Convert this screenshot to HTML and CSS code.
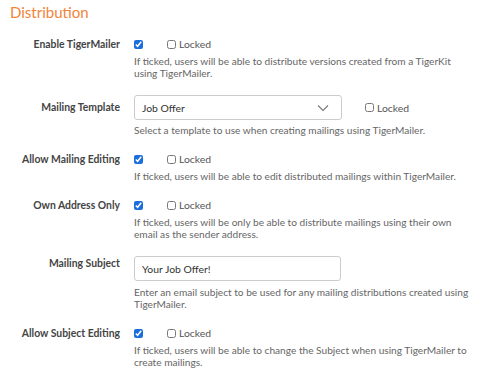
FILE: index.html
```html
<!DOCTYPE html>
<html lang="en">
<head>
  <meta charset="UTF-8" />
  <title>Distribution Settings</title>
  <link rel="stylesheet" href="styles.css">
</head>
<body>

  <h2 class="section-title">Distribution</h2>

  <div class="form-row">
    <label class="field-label">Enable TigerMailer</label>
    <div class="field">
      <div class="controls">
        <input type="checkbox" class="check" checked>
        <label class="lock"><input type="checkbox" class="check">Locked</label>
      </div>
      <p class="help">If ticked, users will be able to distribute versions created from a TigerKit using TigerMailer.</p>
    </div>
  </div>

  <div class="form-row">
    <label class="field-label label-select">Mailing Template</label>
    <div class="field">
      <div class="controls">
        <div class="select">
          <span>Job Offer</span>
          <svg width="12" height="8" viewBox="0 0 12 8"><path d="M1 1.5 L6 6.5 L11 1.5" fill="none" stroke="#777" stroke-width="1.1"/></svg>
        </div>
        <label class="lock lock-wide"><input type="checkbox" class="check">Locked</label>
      </div>
      <p class="help">Select a template to use when creating mailings using TigerMailer.</p>
    </div>
  </div>

  <div class="form-row">
    <label class="field-label">Allow Mailing Editing</label>
    <div class="field">
      <div class="controls">
        <input type="checkbox" class="check" checked>
        <label class="lock"><input type="checkbox" class="check">Locked</label>
      </div>
      <p class="help">If ticked, users will be able to edit distributed mailings within TigerMailer.</p>
    </div>
  </div>

  <div class="form-row">
    <label class="field-label">Own Address Only</label>
    <div class="field">
      <div class="controls">
        <input type="checkbox" class="check" checked>
        <label class="lock"><input type="checkbox" class="check">Locked</label>
      </div>
      <p class="help">If ticked, users will be only be able to distribute mailings using their own email as the sender address.</p>
    </div>
  </div>

  <div class="form-row">
    <label class="field-label label-input">Mailing Subject</label>
    <div class="field">
      <div class="controls">
        <input type="text" class="text-input" value="Your Job Offer!">
      </div>
      <p class="help help-input">Enter an email subject to be used for any mailing distributions created using TigerMailer.</p>
    </div>
  </div>

  <div class="form-row">
    <label class="field-label">Allow Subject Editing</label>
    <div class="field">
      <div class="controls">
        <input type="checkbox" class="check" checked>
        <label class="lock"><input type="checkbox" class="check">Locked</label>
      </div>
      <p class="help">If ticked, users will be able to change the Subject when using TigerMailer to create mailings.</p>
    </div>
  </div>

</body>
</html>
```

FILE: styles.css
```css
body {
  font-family: Lato, "Open Sans", sans-serif;
  background: #fff;
  margin: 0;
  padding: 0 4px 0 10px;
  color: #444;
}

.section-title {
  color: #f2843a;
  font-size: 15px;
  font-weight: normal;
  margin: 2px 0 15px;
  line-height: 20px;
}

.form-row {
  display: flex;
  margin-bottom: 16px;
}

.field-label {
  width: 110px;
  padding-right: 14px;
  text-align: right;
  font-size: 10.4px;
  font-weight: bold;
  line-height: 14px;
  color: #444;
}

.label-select {
  padding-top: 5px;
}

.label-input {
  padding-top: 0;
}

.field {
  flex: 1;
}

.controls {
  display: flex;
  align-items: center;
  min-height: 14px;
}

.check {
  width: 9px;
  height: 9px;
  margin: 0;
  accent-color: #1a6fdc;
}

.lock {
  display: flex;
  align-items: center;
  gap: 3px;
  margin-left: 24px;
  font-size: 10.4px;
  color: #555;
}

.lock-wide {
  margin-left: 23px;
}

.select {
  width: 187px;
  height: 23px;
  border: 1px solid #ccc;
  border-radius: 3px;
  display: flex;
  align-items: center;
  justify-content: space-between;
  padding: 0 12px 0 7px;
  font-size: 10.4px;
  color: #333;
}

.text-input {
  width: 191px;
  height: 23px;
  border: 1px solid #ccc;
  border-radius: 3px;
  padding: 0 7px;
  margin: 0;
  font-family: Lato, sans-serif;
  font-size: 10.4px;
  color: #333;
}

.help {
  margin: 4px 0 0;
  font-size: 10.15px;
  line-height: 12px;
  color: #666;
}

.help-input {
  margin-top: 5px;
}
```
